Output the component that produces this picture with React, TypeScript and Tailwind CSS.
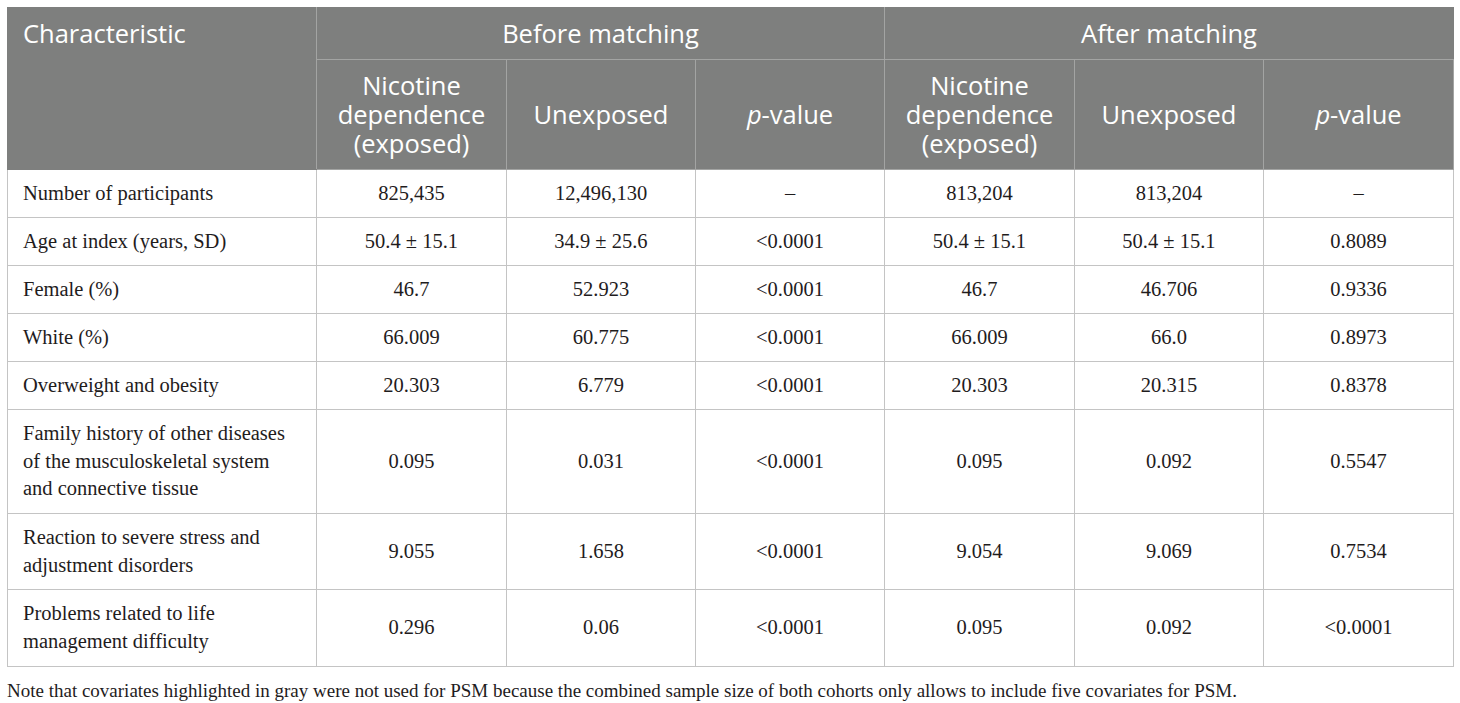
const rows: { label: string[]; cells: string[] }[] = [
  { label: ["Number of participants"], cells: ["825,435", "12,496,130", "–", "813,204", "813,204", "–"] },
  { label: ["Age at index (years, SD)"], cells: ["50.4 ± 15.1", "34.9 ± 25.6", "<0.0001", "50.4 ± 15.1", "50.4 ± 15.1", "0.8089"] },
  { label: ["Female (%)"], cells: ["46.7", "52.923", "<0.0001", "46.7", "46.706", "0.9336"] },
  { label: ["White (%)"], cells: ["66.009", "60.775", "<0.0001", "66.009", "66.0", "0.8973"] },
  { label: ["Overweight and obesity"], cells: ["20.303", "6.779", "<0.0001", "20.303", "20.315", "0.8378"] },
  {
    label: ["Family history of other diseases", "of the musculoskeletal system", "and connective tissue"],
    cells: ["0.095", "0.031", "<0.0001", "0.095", "0.092", "0.5547"],
  },
  {
    label: ["Reaction to severe stress and", "adjustment disorders"],
    cells: ["9.055", "1.658", "<0.0001", "9.054", "9.069", "0.7534"],
  },
  {
    label: ["Problems related to life", "management difficulty"],
    cells: ["0.296", "0.06", "<0.0001", "0.095", "0.092", "<0.0001"],
  },
];

function SubHeads() {
  return (
    <>
      <th className="border border-[#a3a4a3] font-normal text-center align-middle leading-[29px]">
        Nicotine
        <br />
        dependence
        <br />
        (exposed)
      </th>
      <th className="border border-[#a3a4a3] font-normal text-center align-middle">Unexposed</th>
      <th className="border border-[#a3a4a3] font-normal text-center align-middle">
        <i>p</i>-value
      </th>
    </>
  );
}

export default function App() {
  return (
    <div className="w-[1460px] h-[703px] bg-white pt-[7px] pl-[7px]">
      <table className="border-collapse table-fixed w-[1446px]">
        <colgroup>
          <col className="w-[309px]" />
          <col className="w-[190px]" />
          <col className="w-[189px]" />
          <col className="w-[189px]" />
          <col className="w-[190px]" />
          <col className="w-[189px]" />
          <col className="w-[190px]" />
        </colgroup>
        <thead className="bg-[#7e7f7e] text-white text-[25.5px] font-['Open_Sans',sans-serif]">
          <tr className="h-[52px]">
            <th
              rowSpan={2}
              className="border border-[#7e7f7e] border-r-[#a3a4a3] font-normal text-left align-top pl-[15px] pt-[10px] leading-[30px]"
            >
              Characteristic
            </th>
            <th colSpan={3} className="border border-[#a3a4a3] border-t-[#7e7f7e] font-normal text-center">
              Before matching
            </th>
            <th colSpan={3} className="border border-[#a3a4a3] border-t-[#7e7f7e] border-r-[#7e7f7e] font-normal text-center">
              After matching
            </th>
          </tr>
          <tr className="h-[110px]">
            <SubHeads />
            <SubHeads />
          </tr>
        </thead>
        <tbody className="text-[20.5px] text-[#1f1c1d] font-['Liberation_Serif',serif]">
          {rows.map((r, i) => (
            <tr key={i} className={r.label.length > 1 ? "leading-[27.67px]" : "leading-[27px]"}>
              <td className="border border-[#c4c4c4] pl-[15px] pr-2 py-[10px] align-middle whitespace-nowrap">
                {r.label.map((l, j) => (
                  <div key={j}>{l}</div>
                ))}
              </td>
              {r.cells.map((c, j) => (
                <td key={j} className="border border-[#c4c4c4] text-center align-middle py-[10px]">
                  {c}
                </td>
              ))}
            </tr>
          ))}
        </tbody>
      </table>
      <p className="text-[19px] text-[#1f1c1d] font-['Liberation_Serif',serif] mt-[12px] leading-[24px] whitespace-nowrap">
        Note that covariates highlighted in gray were not used for PSM because the combined sample size of both cohorts only allows to include five covariates for PSM.
      </p>
    </div>
  );
}
